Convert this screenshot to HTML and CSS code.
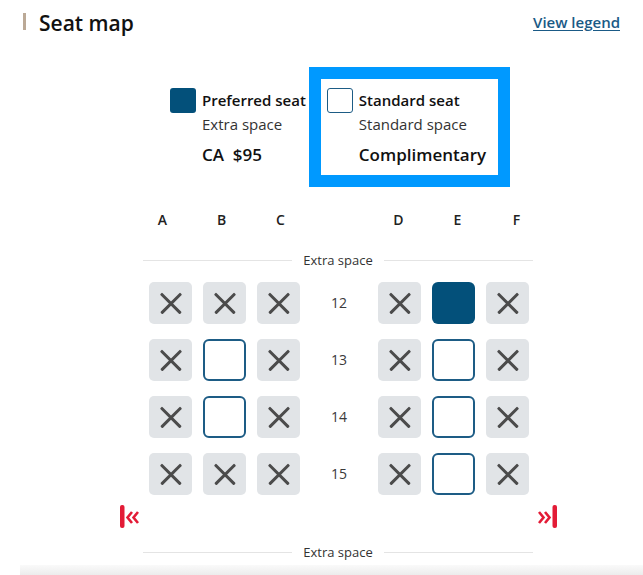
FILE: index.html
```html
<!DOCTYPE html>
<html>
<head>
<title>Seat map</title>
<meta charset="UTF-8" />
<link rel="stylesheet" href="styles.css">
</head>
<body>
<div class="panel">
	<header class="panel-head">
		<h2 class="panel-title">Seat map</h2>
		<a class="legend-link" href="#legend">View legend</a>
	</header>

	<div class="legend">
		<div class="legend-item legend-item-preferred">
			<span class="swatch swatch-preferred"></span>
			<div class="legend-text">
				<div class="legend-name">Preferred seat</div>
				<div class="legend-desc">Extra space</div>
				<div class="legend-price">CA&nbsp; $95</div>
			</div>
		</div>
		<div class="legend-item legend-item-focus">
			<span class="swatch swatch-standard"></span>
			<div class="legend-text">
				<div class="legend-name">Standard seat</div>
				<div class="legend-desc">Standard space</div>
				<div class="legend-price">Complimentary</div>
			</div>
		</div>
	</div>

	<div class="cabin">
		<div class="cols">
			<span>A</span><span>B</span><span>C</span><span></span><span>D</span><span>E</span><span>F</span>
		</div>
		<div class="zone"><span>Extra space</span></div>

		<div class="rows">
			<div class="seat-row">
				<span class="seat taken"></span><span class="seat taken"></span><span class="seat taken"></span>
				<span class="row-num">12</span>
				<span class="seat taken"></span><span class="seat selected"></span><span class="seat taken"></span>
			</div>
			<div class="seat-row">
				<span class="seat taken"></span><span class="seat open"></span><span class="seat taken"></span>
				<span class="row-num">13</span>
				<span class="seat taken"></span><span class="seat open"></span><span class="seat taken"></span>
			</div>
			<div class="seat-row">
				<span class="seat taken"></span><span class="seat open"></span><span class="seat taken"></span>
				<span class="row-num">14</span>
				<span class="seat taken"></span><span class="seat open"></span><span class="seat taken"></span>
			</div>
			<div class="seat-row">
				<span class="seat taken"></span><span class="seat taken"></span><span class="seat taken"></span>
				<span class="row-num">15</span>
				<span class="seat taken"></span><span class="seat open"></span><span class="seat taken"></span>
			</div>
		</div>

		<div class="pager">
			<a class="pager-btn" href="#first" title="First">
				<svg width="20" height="23" viewBox="0 0 20 23">
					<rect x="0" y="0" width="4.5" height="23" rx="2" fill="#e31b36"/>
					<polyline points="12,7 7.5,12.5 12,18" fill="none" stroke="#e31b36" stroke-width="2.6"/>
					<polyline points="18,7 13.5,12.5 18,18" fill="none" stroke="#e31b36" stroke-width="2.6"/>
				</svg>
			</a>
			<a class="pager-btn" href="#last" title="Last">
				<svg width="20" height="23" viewBox="0 0 20 23">
					<polyline points="2,7 6.5,12.5 2,18" fill="none" stroke="#e31b36" stroke-width="2.6"/>
					<polyline points="8,7 12.5,12.5 8,18" fill="none" stroke="#e31b36" stroke-width="2.6"/>
					<rect x="15.5" y="0" width="4.5" height="23" rx="2" fill="#e31b36"/>
				</svg>
			</a>
		</div>

		<div class="zone zone-bottom"><span>Extra space</span></div>
	</div>

	<div class="fade"></div>
</div>
</body>
</html>
```

FILE: styles.css
```css
body{
	margin: 0 ;
	padding: 0 ;
	background: #fff ;
	font-family: "Open Sans", "Noto Sans", sans-serif ;
	color: #1a1a1a ;
}
.panel{
	width: 643px ;
	overflow: hidden ;
}
.panel-head{
	display: flex ;
	justify-content: space-between ;
	align-items: flex-start ;
	padding: 8px 23px 0 23px ;
}
.panel-title{
	display: flex ;
	align-items: center ;
	gap: 13px ;
	margin: 0 ;
	font-size: 21px ;
	line-height: 30px ;
	font-weight: 600 ;
	color: #111 ;
}
.panel-title:before{
	content: '' ;
	width: 3px ;
	height: 17px ;
	margin-bottom: 3px ;
	background: #bba996 ;
}
.legend-link{
	margin-top: 4px ;
	font-size: 15px ;
	line-height: 20px ;
	font-weight: 600 ;
	color: #1a5a86 ;
	text-decoration: underline ;
	text-underline-offset: 2px ;
}

/* legend */
.legend{
	display: flex ;
	align-items: flex-start ;
	margin: 29px 0 0 170px ;
}
.legend-item{
	display: flex ;
	align-items: flex-start ;
	gap: 6px ;
}
.legend-item-preferred{
	padding-top: 21px ;
	margin-right: 3px ;
}
.legend-item-focus{
	border: 12px solid #0099ff ;
	padding: 9px 12px 8px 6px ;
}
.swatch{
	box-sizing: border-box ;
	width: 26px ;
	height: 25px ;
	border-radius: 3px ;
}
.swatch-preferred{
	background: #03507a ;
}
.swatch-standard{
	background: #fff ;
	border: 1.5px solid #1d5c85 ;
}
.legend-name{
	font-size: 15px ;
	line-height: 24px ;
	font-weight: 600 ;
	color: #111 ;
}
.legend-desc{
	font-size: 15px ;
	line-height: 24px ;
	color: #333 ;
}
.legend-price{
	margin-top: 7px ;
	font-size: 17px ;
	line-height: 24px ;
	font-weight: 600 ;
	color: #111 ;
}

/* cabin */
.cols{
	display: grid ;
	grid-template-columns: repeat(7, 59px) ;
	margin: 23px 0 0 133px ;
	font-size: 14px ;
	line-height: 20px ;
	font-weight: 600 ;
	color: #222 ;
	text-align: center ;
}
.zone{
	display: flex ;
	align-items: center ;
	gap: 11px ;
	width: 390px ;
	margin: 21px 0 0 143px ;
	font-size: 13px ;
	line-height: 18px ;
	color: #333 ;
}
.zone:before, .zone:after{
	content: '' ;
	flex: 1 ;
	height: 1px ;
	background: #e4e4e4 ;
}
.zone-bottom{
	margin-top: 15px ;
}
.rows{
	display: flex ;
	flex-direction: column ;
	gap: 15px ;
	margin: 13px 0 0 149px ;
}
.seat-row{
	display: grid ;
	grid-template-columns: 43px 43px 43px 56px 43px 43px 43px ;
	column-gap: 11px ;
	height: 42px ;
}
.seat{
	box-sizing: border-box ;
	display: grid ;
	place-items: center ;
	height: 42px ;
	border-radius: 5px ;
}
.seat.taken{
	background: #e1e4e7 ;
}
.seat.taken:before, .seat.taken:after{
	content: '' ;
	grid-area: 1 / 1 ;
	width: 28px ;
	height: 2.5px ;
	border-radius: 1px ;
	background: #4b4b4b ;
	transform: rotate(45deg) ;
}
.seat.taken:after{
	transform: rotate(-45deg) ;
}
.seat.selected{
	background: #03507a ;
	border-radius: 6px ;
}
.seat.open{
	background: #fff ;
	border: 2px solid #1d5c85 ;
	border-radius: 6px ;
}
.row-num{
	align-self: center ;
	text-align: center ;
	font-size: 14px ;
	line-height: 20px ;
	color: #3a3a3a ;
}
.pager{
	display: flex ;
	justify-content: space-between ;
	width: 437px ;
	margin: 10px 0 0 120px ;
}
.pager-btn{
	display: block ;
	height: 23px ;
}
.pager-btn svg{
	display: block ;
}
.fade{
	height: 14px ;
	margin: 4px 0 0 20px ;
	background: linear-gradient(#fafafa, #e6e6e6) ;
}
```
